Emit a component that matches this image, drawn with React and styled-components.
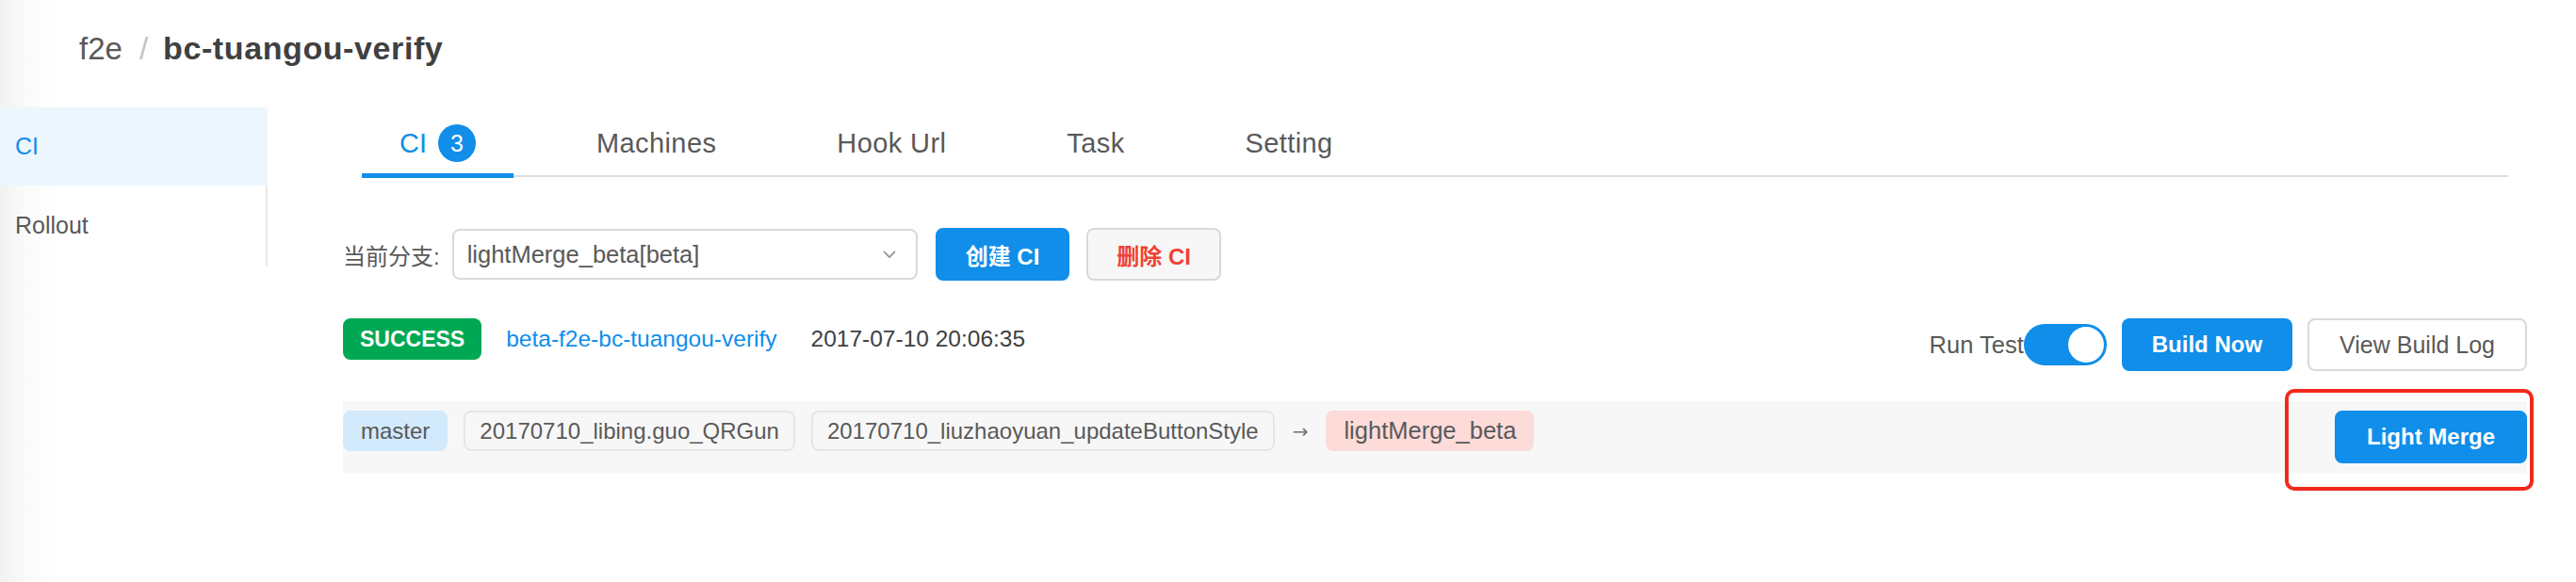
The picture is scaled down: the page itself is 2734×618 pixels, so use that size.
import React from "react";
import styled, { createGlobalStyle } from "styled-components";

const Global = createGlobalStyle`
  html, body { margin: 0; padding: 0; background: #fff; }
  body {
    font-family: "Liberation Sans", "Noto Sans CJK SC", sans-serif;
    color: #595959;
    -webkit-font-smoothing: antialiased;
  }
`;

const Page = styled.div`
  width: 2734px;
  height: 618px;
  box-sizing: border-box;
  background: linear-gradient(90deg, #f2f2f2 0, #fbfbfb 30px, #fff 60px);
  overflow: hidden;
`;

const Header = styled.div`
  height: 114px;
  box-sizing: border-box;
  padding: 31px 0 0 84px;
  font-size: 33px;
  line-height: 40px;
  display: flex;
  align-items: baseline;
`;

const Crumb = styled.span`
  color: ${(p) => (p.$strong ? "#404040" : "#595959")};
  font-weight: ${(p) => (p.$strong ? 700 : 400)};
  font-size: ${(p) => (p.$strong ? 34 : 33)}px;
  letter-spacing: ${(p) => (p.$strong ? 0.6 : 0)}px;
`;

const Slash = styled.span`
  color: #c4c4c4;
  margin: 0 16px 0 18px;
`;

const Main = styled.div`
  display: flex;
  align-items: flex-start;
`;

const Sidebar = styled.nav`
  width: 284px;
  flex: none;
`;

const MenuItem = styled.div`
  height: ${(p) => p.$h}px;
  display: flex;
  align-items: center;
  padding-left: 16px;
  font-size: 25px;
  box-sizing: border-box;
  color: ${(p) => (p.$active ? "#108ee9" : "#595959")};
  background: ${(p) => (p.$active ? "#ecf6fd" : "transparent")};
  border-right: 2px solid ${(p) => (p.$active ? "#ecf6fd" : "#e9e9e9")};
`;

const Content = styled.div`
  flex: 1;
  margin-left: 80px;
  margin-right: 52px;
`;

const TabBar = styled.div`
  display: flex;
  margin: 0 20px;
  border-bottom: 2px solid #dedede;
`;

const Tab = styled.div`
  position: relative;
  height: 72px;
  box-sizing: border-box;
  padding: 4px 40px 0;
  margin-right: 48px;
  display: flex;
  align-items: center;
  font-size: 29px;
  letter-spacing: ${(p) => (p.$active ? 0 : 0.4)}px;
  color: ${(p) => (p.$active ? "#108ee9" : "#595959")};
  &::after {
    content: "";
    display: ${(p) => (p.$active ? "block" : "none")};
    position: absolute;
    left: 0;
    right: 0;
    bottom: -3px;
    height: 5px;
    background: #108ee9;
  }
`;

const Count = styled.span`
  width: 40px;
  height: 40px;
  border-radius: 50%;
  background: #108ee9;
  color: #fff;
  font-size: 25px;
  display: inline-flex;
  align-items: center;
  justify-content: center;
  margin-left: 12px;
`;

const BranchRow = styled.div`
  margin-top: 54px;
  display: flex;
  align-items: center;
  height: 56px;
`;

const Label = styled.span`
  font-size: 24px;
  color: #595959;
  margin-right: 13px;
`;

const Select = styled.div`
  width: 494px;
  height: 54px;
  box-sizing: border-box;
  border: 2px solid #d9d9d9;
  border-radius: 8px;
  display: flex;
  align-items: center;
  justify-content: space-between;
  padding: 0 20px 0 14px;
  font-size: 25.5px;
  color: #595959;
  margin-right: 19px;
`;

const Button = styled.button`
  height: 56px;
  box-sizing: border-box;
  padding: 0 ${(p) => p.$px || 30}px;
  border-radius: 8px;
  font-family: inherit;
  font-size: ${(p) => p.$fs || 24}px;
  font-weight: ${(p) => (p.$bold ? 700 : 400)};
  cursor: pointer;
  border: 2px solid ${(p) => (p.$variant === "primary" ? "#108ee9" : "#d9d9d9")};
  background: ${(p) =>
    p.$variant === "primary" ? "#108ee9" : p.$variant === "danger" ? "#f7f7f7" : "#fff"};
  color: ${(p) =>
    p.$variant === "primary" ? "#fff" : p.$variant === "danger" ? "#f04134" : "#595959"};
  margin-left: ${(p) => p.$ml || 0}px;
`;

const StatusRow = styled.div`
  margin-top: 40px;
  display: flex;
  justify-content: space-between;
  align-items: flex-start;
`;

const StatusLeft = styled.div`
  display: flex;
  align-items: center;
  height: 44px;
  font-size: 24px;
`;

const StatusBadge = styled.span`
  height: 44px;
  padding: 0 18px;
  border-radius: 8px;
  background: #00a854;
  color: #fff;
  font-weight: 700;
  font-size: 23px;
  display: inline-flex;
  align-items: center;
  margin-right: 26px;
`;

const Link = styled.a`
  color: #108ee9;
  text-decoration: none;
  margin-right: 36px;
  font-size: 24.5px;
`;

const DateText = styled.span`
  color: #404040;
  font-size: 24.5px;
`;

const StatusRight = styled.div`
  display: flex;
  align-items: center;
`;

const SwitchLabel = styled.span`
  font-size: 25.5px;
  color: #595959;
`;

const Switch = styled.span`
  width: 88px;
  height: 44px;
  border-radius: 22px;
  background: #108ee9;
  position: relative;
  display: inline-block;
  margin-right: 16px;
  &::after {
    content: "";
    position: absolute;
    top: 3px;
    right: 3px;
    width: 38px;
    height: 38px;
    border-radius: 50%;
    background: #fff;
  }
`;

const MergeRow = styled.div`
  position: relative;
  margin-top: 32px;
  height: 76px;
  background: #f7f7f7;
  display: flex;
  align-items: flex-start;
  justify-content: space-between;
  padding-top: 10px;
  box-sizing: border-box;
`;

const Branches = styled.div`
  display: flex;
  align-items: center;
  gap: 17px;
`;

const Tag = styled.span`
  height: 43px;
  box-sizing: border-box;
  padding: 0 ${(p) => (p.$kind === "plain" ? 15 : 17)}px;
  border-radius: 8px;
  font-size: ${(p) => (p.$kind === "target" ? 25.5 : 24)}px;
  display: inline-flex;
  align-items: center;
  color: #595959;
  background: ${(p) =>
    p.$kind === "base" ? "#d2eafb" : p.$kind === "target" ? "#fcdbd9" : "#f7f7f7"};
  border: 2px solid
    ${(p) =>
      p.$kind === "base" ? "#d2eafb" : p.$kind === "target" ? "#fcdbd9" : "#e6e6e6"};
`;

const Arrow = styled.span`
  font-family: "DejaVu Sans", sans-serif;
  font-size: 20px;
  color: #737373;
  margin: 0 2px;
`;

const Highlight = styled.div`
  position: absolute;
  right: -7px;
  top: -13px;
  width: 264px;
  height: 108px;
  box-sizing: border-box;
  border: 4px solid #f3281c;
  border-radius: 10px;
  pointer-events: none;
`;

const Chevron = () => (
  <svg width="16" height="12" viewBox="0 0 16 12" fill="none">
    <path d="M2 3l6 6 6-6" stroke="#8c8c8c" strokeWidth="1.6" />
  </svg>
);

export default function App() {
  return (
    <Page>
      <Global />
      <Header>
        <Crumb>f2e</Crumb>
        <Slash>/</Slash>
        <Crumb $strong>bc-tuangou-verify</Crumb>
      </Header>
      <Main>
        <Sidebar>
          <MenuItem $active $h={83}>CI</MenuItem>
          <MenuItem $h={85}>Rollout</MenuItem>
        </Sidebar>
        <Content>
          <TabBar>
            <Tab $active>
              CI<Count>3</Count>
            </Tab>
            <Tab>Machines</Tab>
            <Tab>Hook Url</Tab>
            <Tab>Task</Tab>
            <Tab>Setting</Tab>
          </TabBar>
          <BranchRow>
            <Label>当前分支:</Label>
            <Select>
              <span>lightMerge_beta[beta]</span>
              <Chevron />
            </Select>
            <Button $variant="primary" $bold $px={30}>创建 CI</Button>
            <Button $variant="danger" $bold $px={30} $ml={18}>删除 CI</Button>
          </BranchRow>
          <StatusRow>
            <StatusLeft>
              <StatusBadge>SUCCESS</StatusBadge>
              <Link href="#">beta-f2e-bc-tuangou-verify</Link>
              <DateText>2017-07-10 20:06:35</DateText>
            </StatusLeft>
            <StatusRight>
              <SwitchLabel>Run Test</SwitchLabel>
              <Switch />
              <Button $variant="primary" $bold $px={30}>Build Now</Button>
              <Button $ml={16} $px={32} $fs={25}>View Build Log</Button>
            </StatusRight>
          </StatusRow>
          <MergeRow>
            <Branches>
              <Tag $kind="base">master</Tag>
              <Tag $kind="plain">20170710_libing.guo_QRGun</Tag>
              <Tag $kind="plain">20170710_liuzhaoyuan_updateButtonStyle</Tag>
              <Arrow>→</Arrow>
              <Tag $kind="target">lightMerge_beta</Tag>
            </Branches>
            <Button $variant="primary" $bold $px={32}>Light Merge</Button>
            <Highlight />
          </MergeRow>
        </Content>
      </Main>
    </Page>
  );
}
